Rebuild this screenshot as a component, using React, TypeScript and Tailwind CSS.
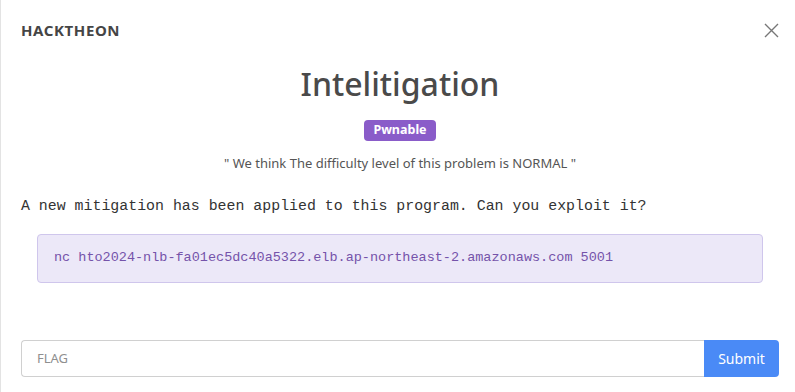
import React from 'react';

const App: React.FC = () => {
    return (
        <div className="w-[795px] h-[392px] bg-white border-l border-[#e3e3e3] overflow-hidden" style={{ fontFamily: '"Noto Sans", "Open Sans", sans-serif' }}>
            {/* Header */}
            <div className="h-[60px] flex items-center justify-between pl-[20px] pr-[16px]">
                <span className="text-[15px] font-bold text-[#454545] tracking-[0.6px]">HACKTHEON</span>
                <button className="w-[16px] h-[16px] flex items-center justify-center text-[#777]">
                    <svg width="15" height="15" viewBox="0 0 15 15" fill="none" stroke="currentColor" strokeWidth="1.4">
                        <path d="M1 1 L14 14 M14 1 L1 14" />
                    </svg>
                </button>
            </div>

            <div className="pl-[20px] pr-[16px]">
                <h1 className="mt-[4px] text-center text-[32px] leading-[40px] font-medium text-[#4a4a4a]">Intelitigation</h1>

                <div className="mt-[16px] flex justify-center">
                    <span className="h-[21px] px-[9px] rounded-[4px] bg-[#8a5cc9] text-white text-[12.5px] font-bold flex items-center">Pwnable</span>
                </div>

                <p className="mt-[12px] text-center text-[13px] leading-[20px] text-[#555]">
                    " We think The difficulty level of this problem is NORMAL "
                </p>

                <p className="mt-[21px] text-[14.9px] leading-[24px] text-[#333]" style={{ fontFamily: '"Liberation Mono", monospace' }}>
                    A new mitigation has been applied to this program. Can you exploit it?
                </p>

                <div className="mt-[16px] ml-[16px] mr-[16px] h-[49px] rounded-[4px] bg-[#ece8f8] border border-[#cfc6ec] flex items-center px-[16px]">
                    <span className="text-[13.5px] text-[#7553aa]" style={{ fontFamily: '"Liberation Mono", monospace' }}>
                        nc hto2024-nlb-fa01ec5dc40a5322.elb.ap-northeast-2.amazonaws.com 5001
                    </span>
                </div>

                <div className="mt-[57px] flex h-[37px]">
                    <input
                        placeholder="FLAG"
                        className="flex-1 border border-[#d0d0d0] border-r-0 rounded-l-[4px] px-[15px] text-[13px] text-[#333] placeholder:text-[#8f8f8f] outline-none"
                    />
                    <button className="w-[75px] bg-[#4a8af6] text-white text-[14px] rounded-r-[4px]">Submit</button>
                </div>
            </div>
        </div>
    );
};

export default App;
